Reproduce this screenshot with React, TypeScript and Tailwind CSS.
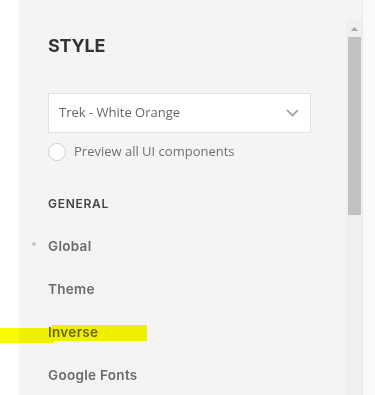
import React from "react";

export default function App() {
  const items = ["Global", "Theme", "Inverse", "Google Fonts"];
  return (
    <div className="relative w-[375px] h-[395px] bg-white flex overflow-hidden">
      <div className="w-[19px] shrink-0 bg-white" />
      <div className="w-[343px] shrink-0 bg-[#f4f4f4] flex">
        <div className="w-[327px] shrink-0 pl-[29px] pt-[34px] flex flex-col">
          <div
            className="h-[24px] leading-[24px] text-[18px] font-bold text-[#333] tracking-[-0.2px]"
            style={{ fontFamily: "Inter, sans-serif" }}
          >
            STYLE
          </div>
          <div className="mt-[35px] w-[263px] h-[40px] bg-white border border-[#e2e2e2] flex items-center justify-between pl-[10px] pr-[11px]">
            <span
              className="text-[13px] text-[#666]"
              style={{ fontFamily: "'Open Sans', sans-serif" }}
            >
              Trek - White Orange
            </span>
            <svg width="13" height="8" viewBox="0 0 13 8" fill="none">
              <path d="M1 1l5.5 5.5L12 1" stroke="#9a9a9a" strokeWidth="1.6" />
            </svg>
          </div>
          <div className="mt-[9px] h-[19px] flex items-center">
            <span className="w-[18px] h-[18px] rounded-full bg-white border border-[#cfcfcf] shrink-0" />
            <span
              className="ml-[8px] text-[13px] text-[#707070]"
              style={{ fontFamily: "'Open Sans', sans-serif" }}
            >
              Preview all UI components
            </span>
          </div>
          <div
            className="mt-[35px] h-[16px] leading-[16px] text-[12px] font-semibold text-[#444] tracking-[0.7px]"
            style={{ fontFamily: "Inter, sans-serif" }}
          >
            GENERAL
          </div>
          <div className="mt-[23px] flex flex-col gap-[23px]">
            {items.map((t, i) => (
              <div key={t} className="relative h-[20px] leading-[20px]">
                {i === 0 && (
                  <span className="absolute left-[-16px] top-[7px] w-[4px] h-[4px] rounded-full bg-[#c4c4c4]" />
                )}
                <span
                  className="text-[13.5px] font-semibold text-[#6a6a6a] tracking-[0.3px]"
                  style={{ fontFamily: "Inter, sans-serif" }}
                >
                  {t}
                </span>
              </div>
            ))}
          </div>
        </div>
        <div className="w-[16px] shrink-0 mt-[20px] bg-[#efefef] flex flex-col items-center">
          <div className="h-[17px] flex items-center justify-center">
            <svg width="7" height="4" viewBox="0 0 7 4">
              <path d="M0 4L3.5 0L7 4z" fill="#a3a3a3" />
            </svg>
          </div>
          <div className="w-[13px] h-[178px] bg-[#c1c1c1]" />
        </div>
      </div>
      <div className="flex-1 bg-[#f9f9f9] border-l border-[#ebebeb]" />
      <span className="absolute left-0 top-[328px] w-[54px] h-[15px] bg-[#fafa00] mix-blend-multiply" />
      <span className="absolute left-[52px] top-[325px] w-[95px] h-[16px] bg-[#fafa00] mix-blend-multiply" />
    </div>
  );
}
